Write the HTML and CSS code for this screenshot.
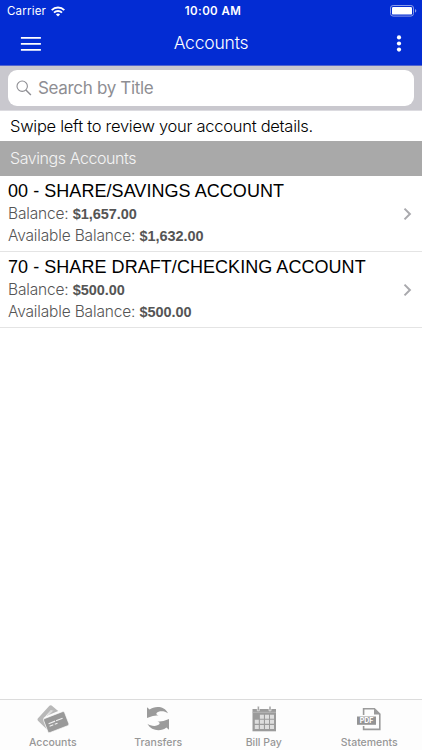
FILE: index.html
```html
<!DOCTYPE html>
<html lang="en">
<head>
    <meta charset="UTF-8">
    <meta name="viewport" content="width=device-width, initial-scale=1.0">
    <title>Accounts</title>
    <link rel="stylesheet" href="styles.css">
</head>
<body>
    <header>
        <div class="status-bar">
            <div class="carrier">
                <span>Carrier</span>
                <svg width="14" height="11" viewBox="0 0 14 11" fill="none" stroke="#fff" stroke-width="1.9">
                    <path d="M0.7 4.1a9 9 0 0 1 12.6 0M3 6.6a5.7 5.7 0 0 1 8 0"/>
                    <path d="M7 10.6L4.9 8.5a3 3 0 0 1 4.2 0z" fill="#fff" stroke="none"/>
                </svg>
            </div>
            <span class="time">10:00 AM</span>
            <svg class="battery" width="27" height="12" viewBox="0 0 27 12">
                <rect x="0.5" y="0.5" width="23" height="10.6" rx="2.6" fill="none" stroke="#8b9be8"/>
                <rect x="2" y="2" width="20" height="7.6" rx="1.2" fill="#fff"/>
                <path d="M25 4v3.6q1.3-.4 1.3-1.8T25 4z" fill="#8b9be8"/>
            </svg>
        </div>
        <nav class="nav-bar">
            <svg width="22" height="16" viewBox="0 0 22 16" fill="#fff">
                <path d="M0.9 0.9h20v1.8h-20zM0.9 7h20v1.8h-20zM0.9 13h20v1.8h-20z"/>
            </svg>
            <h1>Accounts</h1>
            <svg class="more" width="6" height="18" viewBox="0 0 6 18" fill="#fff">
                <circle cx="3" cy="2.4" r="2.1"/>
                <circle cx="3" cy="8.5" r="2.1"/>
                <circle cx="3" cy="14.6" r="2.1"/>
            </svg>
        </nav>
    </header>

    <div class="search">
        <div class="search-box">
            <svg width="16" height="16" viewBox="0 0 16 16" fill="none" stroke="#8e8e93" stroke-width="1.1">
                <circle cx="6.2" cy="6.2" r="5.2"/>
                <path d="M9.9 9.9l5 5" stroke-width="1.4"/>
            </svg>
            <span>Search by Title</span>
        </div>
    </div>

    <main>
        <p class="hint">Swipe left to review your account details.</p>
        <h2>Savings Accounts</h2>
        <div class="account">
            <div>
                <h3>00 - SHARE/SAVINGS ACCOUNT</h3>
                <p>Balance: <strong>$1,657.00</strong></p>
                <p>Available Balance: <strong>$1,632.00</strong></p>
            </div>
            <svg width="9" height="16" viewBox="0 0 9 16" fill="none" stroke="#a9a9ad" stroke-width="2">
                <path d="M1.5 3.6L6.9 9l-5.4 5.4"/>
            </svg>
        </div>
        <div class="account">
            <div>
                <h3>70 - SHARE DRAFT/CHECKING ACCOUNT</h3>
                <p>Balance: <strong>$500.00</strong></p>
                <p>Available Balance: <strong>$500.00</strong></p>
            </div>
            <svg width="9" height="16" viewBox="0 0 9 16" fill="none" stroke="#a9a9ad" stroke-width="2">
                <path d="M1.5 3.6L6.9 9l-5.4 5.4"/>
            </svg>
        </div>
    </main>

    <footer>
        <div class="tab">
            <svg width="32" height="29" viewBox="0 0 32 29">
                <path d="M0.8 13.6L12.4 0.8q1.2-1 2.2-.2L21.2 6 8.2 11.4q-2.6 1.4-1.6 3.8l3.4 9.2L1.2 16q-1.2-1.2-.4-2.4z" fill="#b8b8b8"/>
                <path d="M8.5 11.5l6-6.5M10.8 10.5l5-5" stroke="#ededed"/>
                <g transform="rotate(-21 19.2 17)">
                    <rect x="8" y="9.6" width="22.4" height="15" rx="1.8" fill="#999" stroke="#fff" stroke-width="0.6"/>
                    <path d="M11.5 15.8h7M19.5 15.8h7M11.5 18.6h4M17 18.6h3" stroke="#f2f2f2" stroke-width="1.1"/>
                </g>
            </svg>
            <span>Accounts</span>
        </div>
        <div class="tab">
            <svg width="26" height="29" viewBox="0 0 26 29" fill="#9b9b9b">
                <path d="M2 13V2.3l2.6 2.3C9.5 0.6 19.5 0.6 23 8.2c-3.6-2.8-9.6-2.6-11.4-.2-.5.8 0 1.7 1 2l1 .3Q7.8 10.4 2 13z"/>
                <path d="M24 14v10.8l-2.6-2.3C16.5 26.6 6.5 26.5 2.4 18.8c3.6 2.8 10.2 2.7 12 .3.5-.8 0-1.7-1-2l-1-.3Q18.2 16.8 24 14z"/>
            </svg>
            <span>Transfers</span>
        </div>
        <div class="tab">
            <svg width="26" height="29" viewBox="0 0 26 29">
                <path d="M1.5 4H25v22.3H1.5z" fill="#9b9b9b"/>
                <path d="M1.5 7.3H25" stroke="#bdbdbd" stroke-width="0.8"/>
                <path d="M6.3 1.2v4.6h2V1.2zM18 1.2v4.6h2V1.2z" fill="#9b9b9b" stroke="#fff" stroke-width="0.6"/>
                <path d="M8.9 9.8h4v4h-4zM14 9.8h4v4h-4zM19 9.8h4v4h-4zM3.8 14.8h4v4h-4zM8.9 14.8h4v4h-4zM14 14.8h4v4h-4zM19 14.8h4v4h-4zM3.8 19.9h4v4h-4zM8.9 19.9h4v4h-4zM14 19.9h4v4h-4zM19 19.9h4v4h-4z" fill="#dedede"/>
            </svg>
            <span>Bill Pay</span>
        </div>
        <div class="tab">
            <svg width="26" height="29" viewBox="0 0 26 29">
                <path d="M7.6 10V3.8h10.8l5.4 5.4v15.2H7.6V21" fill="none" stroke="#9b9b9b" stroke-width="1.6"/>
                <path d="M18 3.4v6.2h6.2z" fill="#9b9b9b"/>
                <rect x="1" y="11.5" width="19" height="8.3" fill="#949494"/>
                <text class="pdf" x="10.6" y="18" text-anchor="middle">PDF</text>
            </svg>
            <span>Statements</span>
        </div>
    </footer>
</body>
</html>
```
FILE: styles.css
```css
:root {
    --blue: #032cd3;
    --line: #e4e4e4;
    --tab-text: #979797;
}

* {
    box-sizing: border-box;
}

body {
    display: flex;
    flex-direction: column;
    height: 100vh;
    margin: 0;
    background-color: #fff;
    color: #000;
    font-family: Inter, "Liberation Sans", sans-serif;
}

h1, h2, h3, p {
    margin: 0;
    font-weight: 300;
    white-space: nowrap;
}

svg {
    display: block;
    flex: none;
}

header {
    height: 66px;
    background-color: var(--blue);
    color: #fff;
    border-bottom: 1px solid #5265ce;
}

.status-bar {
    display: grid;
    grid-template-columns: 1fr auto 1fr;
    align-items: center;
    height: 22px;
    padding: 0 5px 0 7px;
}

.carrier {
    display: flex;
    align-items: center;
    gap: 5px;
    font-size: 11.5px;
    letter-spacing: 0.2px;
}

.time {
    padding-left: 2px;
    font-size: 11.5px;
    font-weight: 600;
    letter-spacing: 0.4px;
}

.battery {
    justify-self: end;
}

.nav-bar {
    display: grid;
    grid-template-columns: 1fr auto 1fr;
    align-items: center;
    height: 43px;
    padding: 0 20px;
}

.more {
    justify-self: end;
}

h1 {
    padding-bottom: 2px;
    font-size: 17.5px;
    line-height: 20px;
    letter-spacing: -0.2px;
}

.search {
    height: 45px;
    padding: 4px 8px 5px;
    background-color: #c9c8ce;
    border-bottom: 1px solid #dcdbe0;
}

.search-box {
    display: flex;
    align-items: center;
    gap: 6px;
    height: 36px;
    padding-left: 8px;
    border-radius: 9px;
    background-color: #fff;
    color: #8e8e93;
    font-size: 17px;
    letter-spacing: -0.33px;
}

main {
    flex: 1;
}

.hint {
    padding-left: 10px;
    font-size: 16.5px;
    line-height: 30px;
    letter-spacing: -0.27px;
}

h2 {
    padding-left: 10px;
    background-color: #a9a9a9;
    color: #f4f4f4;
    font-size: 16px;
    line-height: 35px;
    letter-spacing: -0.42px;
}

.account {
    display: flex;
    align-items: center;
    justify-content: space-between;
    height: 76px;
    padding: 0 10px 1px 8px;
    border-bottom: 1px solid var(--line);
}

h3 {
    font-family: "Liberation Sans", Arial, sans-serif;
    font-size: 18px;
    font-weight: 400;
    line-height: 24px;
    letter-spacing: 0.05px;
}

.account p {
    color: #555;
    font-size: 15.5px;
    line-height: 21px;
    letter-spacing: -0.17px;
}

.account strong {
    font-family: "Liberation Sans", Arial, sans-serif;
    font-size: 14.5px;
    font-weight: 700;
    letter-spacing: -0.05px;
}

footer {
    display: flex;
    height: 51px;
    border-top: 1px solid #dcdcdc;
    background-color: #fdfdfd;
}

.tab {
    display: flex;
    flex: 1;
    flex-direction: column;
    align-items: center;
    padding-top: 5px;
    color: var(--tab-text);
    font-size: 10.5px;
    font-weight: 500;
    line-height: 18px;
}

.pdf {
    fill: #fff;
    font-size: 7px;
    font-weight: 700;
}
```
